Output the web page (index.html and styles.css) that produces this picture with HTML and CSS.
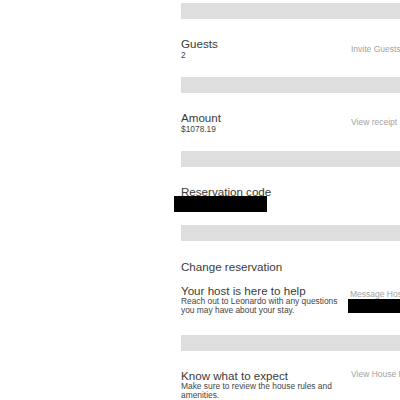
FILE: index.html
```html
<!DOCTYPE html>
<html>
<head>
<meta charset="utf-8">
<link rel="stylesheet" href="styles.css">
</head>
<body>
<div class="page">
  <div class="bar"></div>
  <div class="row row--std">
    <div class="main">
      <div class="title">Guests</div>
      <div class="sub">2</div>
    </div>
    <div class="link link--guests">Invite Guests</div>
  </div>
  <div class="bar"></div>
  <div class="row row--std">
    <div class="main">
      <div class="title">Amount</div>
      <div class="sub">$1078.19</div>
    </div>
    <div class="link link--receipt">View receipt</div>
  </div>
  <div class="bar"></div>
  <div class="row row--code">
    <div class="main">
      <div class="title">Reservation code</div>
      <div class="redact redact--code"></div>
    </div>
  </div>
  <div class="bar"></div>
  <div class="section">
    <div class="title">Change reservation</div>
    <div class="row row--host">
      <div class="main">
        <div class="title title--tight">Your host is here to help</div>
        <div class="desc">Reach out to Leonardo with any questions you may have about your stay.</div>
      </div>
      <div class="link link--host">
        <div class="link-text">Message Host</div>
        <div class="redact redact--host"></div>
      </div>
    </div>
  </div>
  <div class="bar"></div>
  <div class="row row--expect">
    <div class="main">
      <div class="title title--tight">Know what to expect</div>
      <div class="desc">Make sure to review the house rules and amenities.</div>
    </div>
    <div class="link link--house">View House Rules</div>
  </div>
</div>
</body>
</html>
```
FILE: styles.css
```css
html, body {
  margin: 0;
  padding: 0;
  background: #fff;
  overflow: hidden;
}
body {
  font-family: "Liberation Sans", Arial, sans-serif;
  color: #3c3c3c;
}
.page {
  padding: 3px 0 0 181px;
  width: 300px;
}
.bar {
  height: 16px;
  background: #dedede;
}
.row {
  display: flex;
  align-items: flex-start;
}
.main {
  width: 167px;
  flex: none;
}
.title {
  font-size: 11.6px;
  line-height: 13px;
  color: #3a3a3a;
  white-space: nowrap;
}
.title--tight {
  line-height: 12px;
}
.sub {
  font-size: 8.4px;
  line-height: 10px;
  color: #444;
}
.desc {
  font-size: 8.4px;
  line-height: 8.5px;
  color: #444;
}
.row--std {
  padding: 18px 0 17px;
}
.row--code {
  padding: 18px 0 13px;
}
.section {
  padding: 19px 0 21px;
}
.row--host {
  margin-top: 12px;
}
.row--expect {
  padding-top: 19px;
  height: 60px;
}
.link {
  font-size: 8.5px;
  line-height: 10px;
  color: #a3a3a3;
  white-space: nowrap;
  padding-left: 3px;
}
.link--guests { margin-top: 7px; }
.link--receipt { margin-top: 5.5px; }
.link--host { margin-top: 4px; padding-left: 0; }
.link--host .link-text { padding-left: 2px; }
.link--house { margin-top: -1px; }
.redact {
  background: #000;
}
.redact--code {
  width: 93px;
  height: 16px;
  margin: -2px 0 0 -7px;
}
.redact--host {
  width: 80px;
  height: 14px;
}
```
